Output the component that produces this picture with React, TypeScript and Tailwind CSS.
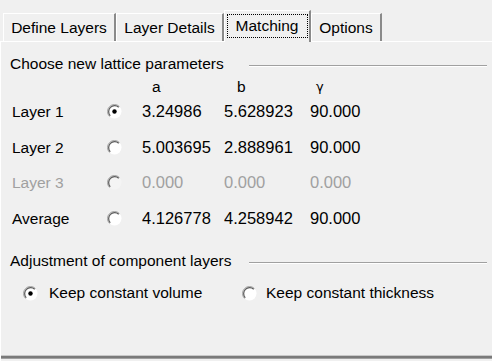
import React from "react";

const font = { fontFamily: '"Liberation Sans", Arial, sans-serif' };

function Radio({ checked, disabled }: { checked?: boolean; disabled?: boolean }) {
  return (
    <svg width="15" height="15" viewBox="0 0 15 15" className="shrink-0">
      <circle cx="7.5" cy="7.5" r="7" fill={disabled ? "#f4f4f4" : "#ffffff"} />
      <path d="M2.55 12.45 A7 7 0 0 1 12.45 2.55" fill="none" stroke="#a0a0a0" strokeWidth="1" />
      <path d="M3.26 11.74 A6 6 0 0 1 11.74 3.26" fill="none" stroke="#5a5a5a" strokeWidth="1.2" />
      {checked && <circle cx="7.5" cy="7.5" r="2.2" fill="#000" />}
    </svg>
  );
}

function Tab({ label, width }: { label: string; width: string }) {
  return (
    <div
      className={`${width} h-[28px] flex items-center justify-center bg-[#f0f0f0] border-t border-l border-white border-r-2 border-r-[#8a8a8a] text-[15.5px] text-black`}
    >
      {label}
    </div>
  );
}

function GroupTitle({ children }: { children: React.ReactNode }) {
  return (
    <div className="flex items-center h-[16px] pl-[9px] pr-[5px]">
      <span className="w-[239px] text-[15.5px] text-black whitespace-nowrap">{children}</span>
      <div className="flex-1 mt-[4px]">
        <div className="h-px bg-[#a0a0a0]" />
        <div className="h-px bg-white" />
      </div>
    </div>
  );
}

const rows = [
  { name: "Layer 1", a: "3.24986", b: "5.628923", g: "90.000", checked: true },
  { name: "Layer 2", a: "5.003695", b: "2.888961", g: "90.000" },
  { name: "Layer 3", a: "0.000", b: "0.000", g: "0.000", disabled: true },
  { name: "Average", a: "4.126778", b: "4.258942", g: "90.000" },
];

export default function App() {
  return (
    <div className="w-[492px] h-[361px] bg-[#f0f0f0] overflow-hidden flex flex-col" style={font}>
      <div className="h-[41px] flex items-end pl-[3px] shrink-0">
        <Tab label="Define Layers" width="w-[113px]" />
        <Tab label="Layer Details" width="w-[108px]" />
        <div className="w-[87px] h-[32px] -mb-px z-10 relative bg-[#f0f0f0] border-t border-l border-white border-r-2 border-r-[#8a8a8a] flex items-start justify-center pt-[3px]">
          <div className="border border-dotted border-black h-[24px] w-[81px] flex items-center justify-center text-[15.5px] text-black">
            Matching
          </div>
        </div>
        <Tab label="Options" width="w-[71px]" />
      </div>

      <div className="flex-1 border-t border-l border-white flex flex-col pt-[14px]">
        <GroupTitle>Choose new lattice parameters</GroupTitle>

        <div className="flex h-[15px] mt-[7px] text-[15.5px] leading-[15px] text-black pl-[12px]">
          <div className="w-[139px]" />
          <div className="w-[85px]">a</div>
          <div className="w-[79px]">b</div>
          <div className="font-['DejaVu_Sans'] text-[13px]">γ</div>
        </div>

        {rows.map((r) => (
          <div
            key={r.name}
            className={`flex items-center h-[35.5px] pl-[11px] text-[15.5px] ${r.disabled ? "text-[#a0a0a0]" : "text-black"}`}
          >
            <div className="w-[95px]">{r.name}</div>
            <div className="w-[35px] flex items-center">
              <Radio checked={r.checked} disabled={r.disabled} />
            </div>
            <div className="w-[82px] text-[16.5px]">{r.a}</div>
            <div className="w-[86px] text-[16.5px]">{r.b}</div>
            <div className="text-[16.5px]">{r.g}</div>
          </div>
        ))}

        <div className="mt-[17px]">
          <GroupTitle>Adjustment of component layers</GroupTitle>
        </div>

        <div className="flex items-center h-[16px] mt-[16px] pl-[22px] text-[15.5px] text-black">
          <Radio checked />
          <span className="ml-[11px] w-[193px]">Keep constant volume</span>
          <Radio />
          <span className="ml-[9px]">Keep constant thickness</span>
        </div>

        <div className="flex-1" />
        <div className="h-px bg-[#c8c8c8]" />
        <div className="h-[2px] bg-[#7a7a7a]" />
        <div className="h-px bg-[#a0a0a0]" />
        <div className="h-[2px]" />
      </div>
    </div>
  );
}
